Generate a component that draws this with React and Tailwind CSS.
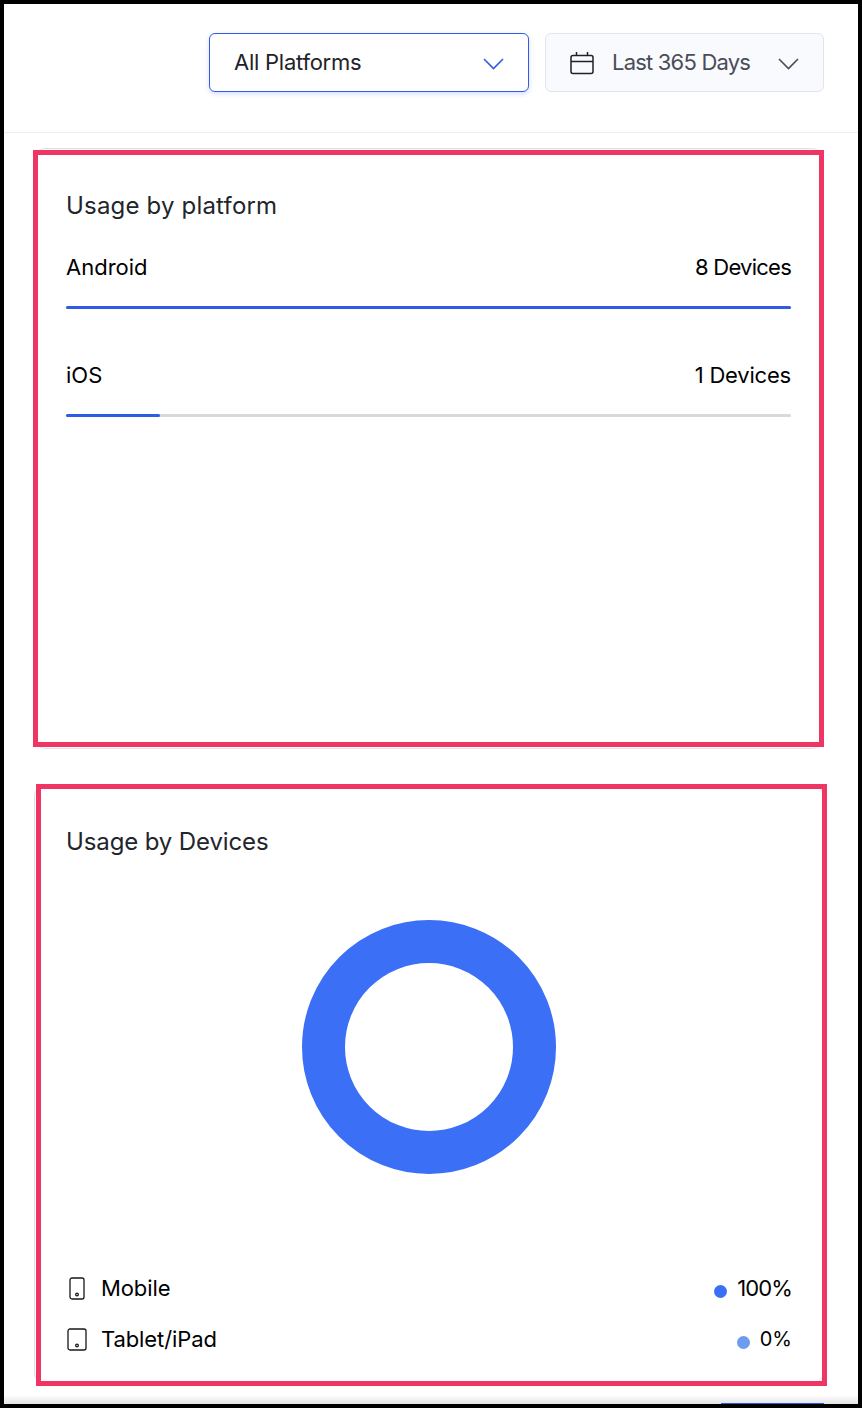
const font = "font-['Inter','Noto_Sans',sans-serif]"

function Chevron({ className }) {
  return (
    <svg width="21" height="12" viewBox="0 0 21 12" fill="none" stroke="currentColor" strokeWidth="1.6" className={className}>
      <path d="M1 1l9.5 9.5L20 1" />
    </svg>
  )
}

function CalendarIcon() {
  return (
    <svg width="24" height="24" viewBox="0 0 24 24" fill="none" stroke="#1f2229" strokeWidth="1.5" strokeLinejoin="round">
      <rect x="1" y="4.5" width="22" height="18" rx="2" />
      <path d="M1 10.5h22M6.5 1v3.5M17.5 1v3.5" />
    </svg>
  )
}

function MobileIcon() {
  return (
    <svg width="16" height="23" viewBox="0 0 16 23" fill="none" stroke="#16181d" strokeWidth="1.3">
      <rect x="1" y="1" width="14" height="21" rx="2" />
      <circle cx="8" cy="17.5" r="1.3" />
    </svg>
  )
}

function TabletIcon() {
  return (
    <svg width="20" height="23" viewBox="0 0 20 23" fill="none" stroke="#16181d" strokeWidth="1.3">
      <rect x="1" y="1" width="18" height="21" rx="2" />
      <circle cx="10" cy="17.5" r="1.3" />
    </svg>
  )
}

function PlatformRow({ name, count, countClass, percent, className }) {
  return (
    <div className={className}>
      <div className="flex items-center justify-between text-[22px] leading-[28px] text-black">
        <span>{name}</span>
        <span className={countClass}>{count}</span>
      </div>
      <div className="mt-[25px] h-[3px] w-full rounded-full bg-[#d9d9d9]">
        <div className="h-full rounded-full bg-[#2f5be7]" style={{ width: percent + "%" }} />
      </div>
    </div>
  )
}

function DeviceRow({ icon, name, value, valueClass, dot, className }) {
  return (
    <div className={"flex h-[28px] items-center justify-between text-[22px] text-black " + className}>
      <div className="flex items-center">
        <div className="mr-[13px] flex w-[22px] justify-center">{icon}</div>
        <span className="tracking-[-0.1px]">{name}</span>
      </div>
      <div className="flex items-center gap-[10px]">
        <span className="mt-[6px] h-[13px] w-[13px] rounded-full" style={{ backgroundColor: dot }} />
        <span className={valueClass}>{value}</span>
      </div>
    </div>
  )
}

export default function App() {
  return (
    <div className={"relative isolate h-[1408px] w-[862px] overflow-hidden border-4 border-black bg-white " + font}>
      {/* filters */}
      <div className="flex h-[129px] items-start justify-end gap-4 border-b border-[#eceef3] pr-[34px] pt-[29px]">
        <div className="flex h-[59px] w-[320px] items-center justify-between rounded-md border border-[#2f5be7] bg-white pl-[24px] pr-[24px] text-[22px] text-[#1f2229] shadow-[0_2px_5px_rgba(47,91,231,0.2)]">
          <span className="tracking-[-0.25px]">All Platforms</span>
          <Chevron className="mt-[3px] text-[#2f5be7]" />
        </div>
        <div className="flex h-[59px] w-[279px] items-center rounded-md border border-[#e1e4ee] bg-[#f9fafd] pl-[24px] pr-[24px] text-[22px] text-[#4a4d58]">
          <CalendarIcon />
          <span className="ml-[18px] tracking-[-0.8px]">Last 365 Days</span>
          <Chevron className="ml-auto mt-[3px] text-[#4a4d58]" />
        </div>
      </div>

      {/* usage by platform */}
      <section className="relative ml-[29px] mt-[17px] h-[597px] w-[791px] border-[5px] border-[#ee3564] px-[28px] pt-[33px]">
        <div className="absolute -inset-x-[3px] -inset-y-[7px] -z-10 rounded-[10px] border border-[#dfe1ea]" />
        <h2 className="text-[24px] leading-[36px] font-normal tracking-[0.18px] text-[#22252c]">Usage by platform</h2>
        <PlatformRow name="Android" count="8 Devices" countClass="tracking-[-0.75px]" percent={100} className="mt-[29px]" />
        <PlatformRow name="iOS" count="1 Devices" countClass="tracking-[-0.2px]" percent={13} className="mt-[52px]" />
      </section>

      {/* usage by devices */}
      <section className="relative ml-[32px] mt-[37px] flex h-[602px] w-[791px] flex-col border-[5px] border-[#ee3564] pl-[25px] pr-[30px] pt-[35px]">
        <div className="absolute -bottom-[2px] -left-[7px] -right-[2px] -top-[3px] -z-10 rounded-[10px] border border-[#dfe1ea]" />
        <h2 className="text-[24px] leading-[36px] font-normal tracking-[-0.12px] text-[#22252c]">Usage by Devices</h2>
        <div className="mt-[60px] flex justify-center">
          <svg width="254" height="254" viewBox="0 0 254 254">
            <circle cx="127" cy="127" r="105.5" fill="none" stroke="#3b6ff5" strokeWidth="43" />
          </svg>
        </div>
        <DeviceRow icon={<MobileIcon />} name="Mobile" value="100%" valueClass="tracking-[-0.9px]" dot="#3b6ff5" className="mt-[100px]" />
        <DeviceRow icon={<TabletIcon />} name="Tablet/iPad" value="0%" valueClass="text-[20px]" dot="#6c9bef" className="mt-[23px]" />
      </section>

      {/* page cut off here */}
      <div className="relative h-[18px] bg-gradient-to-b from-white via-white to-[#e4e4e4]">
        <div className="absolute bottom-0 left-[717px] h-px w-[103px] bg-[#2f5be7]" />
      </div>
    </div>
  )
}
